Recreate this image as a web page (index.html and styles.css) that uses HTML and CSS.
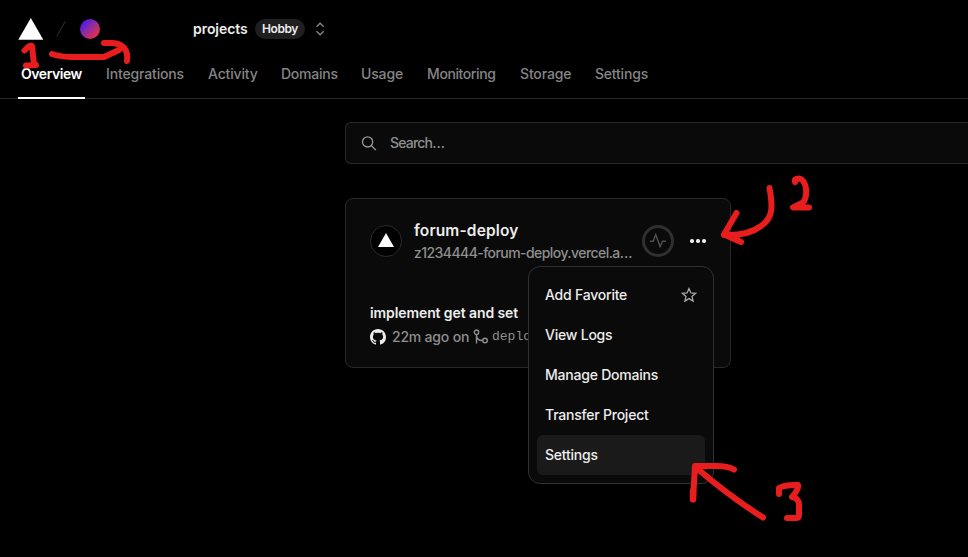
FILE: index.html
```
<!DOCTYPE html>
<html lang="en">
<head>
<meta charset="utf-8">
<title>projects – Overview</title>
<link rel="stylesheet" href="styles.css">
</head>
<body>
<header class="header">
  <div class="scope">
    <svg class="logo" viewBox="0 0 26 22"><path d="M12.8 0 25.3 21.7H.3z" fill="#fff"/></svg>
    <svg class="slash" viewBox="0 0 12 18"><path d="M.7 16.700 9.300 1.200" stroke="#333" stroke-width="1"/></svg>
    <span class="avatar"></span>
    <span class="team">projects</span>
    <span class="pill">Hobby</span>
    <svg class="switcher" viewBox="0 0 10 14"><path d="m1.500 4.700 3.600-3.500 3.600 3.500M1.500 9.300l3.600 3.500 3.600-3.500" fill="none" stroke="#8c8c8c" stroke-width="1.2"/></svg>
  </div>
  <nav class="tabs">
    <a class="tab active">Overview</a>
    <a class="tab integrations">Integrations</a>
    <a class="tab activity">Activity</a>
    <a class="tab domains">Domains</a>
    <a class="tab usage">Usage</a>
    <a class="tab monitoring">Monitoring</a>
    <a class="tab storage">Storage</a>
    <a class="tab settings">Settings</a>
  </nav>
</header>
<main class="main">
  <div class="search">
    <svg class="search-icon" viewBox="0 0 16 16"><path d="M11.700 6.900a5.100 5.100 0 1 1-10.200 0 5.100 5.100 0 0 1 10.200 0ZM10.300 10.500l4.600 4.600" fill="none" stroke="#999" stroke-width="1.3"/></svg>
    <span>Search…</span>
  </div>
  <section class="card">
    <div class="card-head">
      <span class="project-icon"><svg viewBox="0 0 16 14"><path d="M8 0 16 14H0z" fill="#fff"/></svg></span>
      <div class="names">
        <div class="name">forum-deploy</div>
        <div class="domain">z1234444-forum-deploy.vercel.a…</div>
      </div>
      <span class="pulse"><svg viewBox="0 0 16 16"><path d="M0 8.3h3.2L5.700 1.400l4.400 12.200 2.400-5.300H16" fill="none" stroke="#505050" stroke-width="1.4"/></svg></span>
      <span class="more"><i></i><i></i><i></i></span>
    </div>
    <div class="commit">implement get and set</div>
    <div class="meta">
      <svg class="github" viewBox="0 0 16 16"><path fill="#ededed" d="M8 0C3.58 0 0 3.58 0 8c0 3.54 2.29 6.53 5.47 7.59.4.07.55-.17.55-.38 0-.19-.01-.82-.01-1.49-2.01.37-2.53-.49-2.69-.94-.09-.23-.48-.94-.82-1.13-.28-.15-.68-.52-.01-.53.63-.01 1.08.58 1.23.82.72 1.21 1.87.87 2.33.66.07-.52.28-.87.51-1.07-1.78-.2-3.64-.89-3.64-3.95 0-.87.31-1.59.82-2.15-.08-.2-.36-1.02.08-2.12 0 0 .67-.21 2.2.82.64-.18 1.32-.27 2-.27s1.36.09 2 .27c1.53-1.04 2.2-.82 2.2-.82.44 1.1.16 1.92.08 2.12.51.56.82 1.27.82 2.15 0 3.07-1.87 3.75-3.65 3.95.29.25.54.73.54 1.48 0 1.07-.01 1.93-.01 2.2 0 .21.15.46.55.38A8.01 8.01 0 0 0 16 8c0-4.42-3.58-8-8-8z"/></svg>
      <span class="time">22m ago on</span>
      <svg class="branch" viewBox="0 0 16 16"><g fill="none" stroke="#8f8f8f" stroke-width="1.4"><circle cx="3.500" cy="3.200" r="2.200"/><circle cx="12" cy="11.500" r="2.300"/><path d="M3.500 5.400V14.500M3.500 6.200c0 3.600 2.500 5.300 6.200 5.300"/></g></svg>
      <span class="branch-name">deploy</span>
    </div>
    <div class="menu">
      <div class="item favorite"><span>Add Favorite</span><svg class="star" viewBox="0 0 16 16"><path d="m8 1.500 1.900 4.400 4.700.4-3.600 3.100 1.100 4.700L8 11.600l-4.100 2.500L5 9.400 1.400 6.300l4.700-.4z" fill="none" stroke="#a5a5a5" stroke-width="1.3"/></svg></div>
      <div class="item logs"><span>View Logs</span></div>
      <div class="item manage"><span>Manage Domains</span></div>
      <div class="item transfer"><span>Transfer Project</span></div>
      <div class="item hover"><span>Settings</span></div>
    </div>
  </section>
</main>
<svg class="marks" viewBox="0 0 968 557">
  <path d="M24.500 50.500 28 47Q30 45.500 32 46L34 65M26 65.500 36 65"/>
  <path d="M52 54Q61 57 73 57H104L119 50 122 47M104 43H112Q129 44 127 61"/>
  <path d="M769.500 188C773 207 773 218 761 226Q748 236 724 235M736.500 213 724 234.500 741 242M726 235 737 238"/>
  <path d="M795 182Q794 178.500 799 178.500C808 180 808 200 802 203L793 207.500H809"/>
  <path d="M763 517.500Q729 496 696 467.500M734 469.500Q728 466 716 466H695L693 499.500"/>
  <path stroke-width="6.500" d="M693 491V499"/>
  <path d="M779 494V488Q785 484.500 798 485Q799 489 792 497Q799 498 799 505V515Q799 518 796 518H787"/>
</svg>
</body>
</html>
```
FILE: styles.css
```
* { box-sizing: border-box; }
body {
  position: relative;
  width: 968px;
  height: 557px;
  margin: 0;
  overflow: hidden;
  background: #000;
  color: #ededed;
  font: 500 14px/20px Inter, "Liberation Sans", sans-serif;
  white-space: nowrap;
}
svg { display: block; flex: none; }

.header { height: 99px; border-bottom: 1px solid #292929; }
.scope { display: flex; align-items: center; height: 58px; padding-left: 18px; }
.logo { width: 26px; height: 22px; }
.slash { width: 12px; height: 18px; margin-left: 12px; }
.avatar { width: 20px; height: 20px; margin-left: 12px; border-radius: 50%; background: linear-gradient(135deg, #3b12ff 5%, #8c2ca4 45%, #ff302c 95%); }
.team { width: 55px; margin-left: 93px; font-weight: 600; letter-spacing: -.05px; }
.pill { width: 50px; height: 20px; margin-left: 7px; border-radius: 10px; background: #1f1f1f; font-size: 12px; font-weight: 600; letter-spacing: -.4px; text-align: center; }
.switcher { width: 10px; height: 14px; margin-left: 10px; }

.tabs { display: flex; gap: 18px; height: 41px; padding-left: 18px; }
.tab { height: 41px; padding: 6px 3px 0; color: #858585; font-weight: 450; letter-spacing: -.15px; }
.active { width: 67px; border-bottom: 2px solid #fff; color: #fff; font-weight: 600; letter-spacing: -.45px; }
.integrations { width: 84px; }
.activity { width: 55px; }
.domains { width: 62px; letter-spacing: -.25px; }
.usage { width: 48px; }
.monitoring { width: 75px; letter-spacing: -.4px; }
.storage { width: 57px; }
.settings { width: 60px; letter-spacing: -.2px; }

.main { padding: 23px 0 0 345px; }
.search { display: flex; align-items: center; gap: 13px; height: 42px; padding-left: 15px; border: 1px solid #292929; border-right: 0; border-radius: 6px 0 0 6px; background: #0a0a0a; color: #8f8f8f; font-weight: 450; letter-spacing: -.8px; }
.search-icon { width: 16px; height: 16px; }
.card { position: relative; width: 386px; height: 170px; margin-top: 34px; padding: 22px 24px; border: 1px solid #292929; border-radius: 8px; background: #0a0a0a; }
.card-head { display: flex; align-items: center; height: 40px; }
.project-icon { display: grid; place-items: center; width: 32px; height: 32px; border: 1px solid #292929; border-radius: 50%; background: #000; }
.project-icon svg { width: 16px; height: 14px; margin-top: -2px; }
.names { width: 220px; margin-left: 12px; }
.name { height: 21px; font-size: 15.5px; font-weight: 600; line-height: 21px; letter-spacing: .15px; }
.domain { height: 22px; color: #8f8f8f; font-weight: 450; line-height: 24px; letter-spacing: -.56px; }
.pulse { display: grid; place-items: center; width: 32px; height: 32px; margin-left: 8px; border: 3px solid #303030; border-radius: 50%; }
.project-icon, .names, .pulse, .more { flex: none; }
.pulse svg { width: 16px; height: 16px; }
.more { display: flex; gap: 2.500px; margin-left: 16px; }
.more i { width: 3.500px; height: 3.500px; border-radius: 50%; background: #ededed; }
.commit { margin-top: 42px; font-weight: 600; letter-spacing: -.1px; }
.meta { display: flex; align-items: center; height: 28px; color: #8f8f8f; font-weight: 450; letter-spacing: -.2px; }
.github { width: 16px; height: 16px; }
.time { width: 77px; margin-left: 6px; }
.branch { width: 16px; height: 16px; margin-left: 4px; }
.branch-name { margin-left: 3px; font: 13px/20px "Liberation Mono", monospace; letter-spacing: 0; }

.menu { position: absolute; top: 67px; left: 182px; width: 186px; height: 218px; padding: 8px; border: 1px solid #303030; border-radius: 12px; background: #0a0a0a; }
.item { display: flex; align-items: center; justify-content: space-between; height: 40px; padding: 0 8px; border-radius: 6px; letter-spacing: -.22px; }
.hover { background: #1a1a1a; }
.star { width: 16px; height: 16px; }

.marks { position: absolute; inset: 0; width: 968px; height: 557px; fill: none; stroke: #e81e1e; stroke-width: 6; stroke-linecap: round; stroke-linejoin: round; }
```
